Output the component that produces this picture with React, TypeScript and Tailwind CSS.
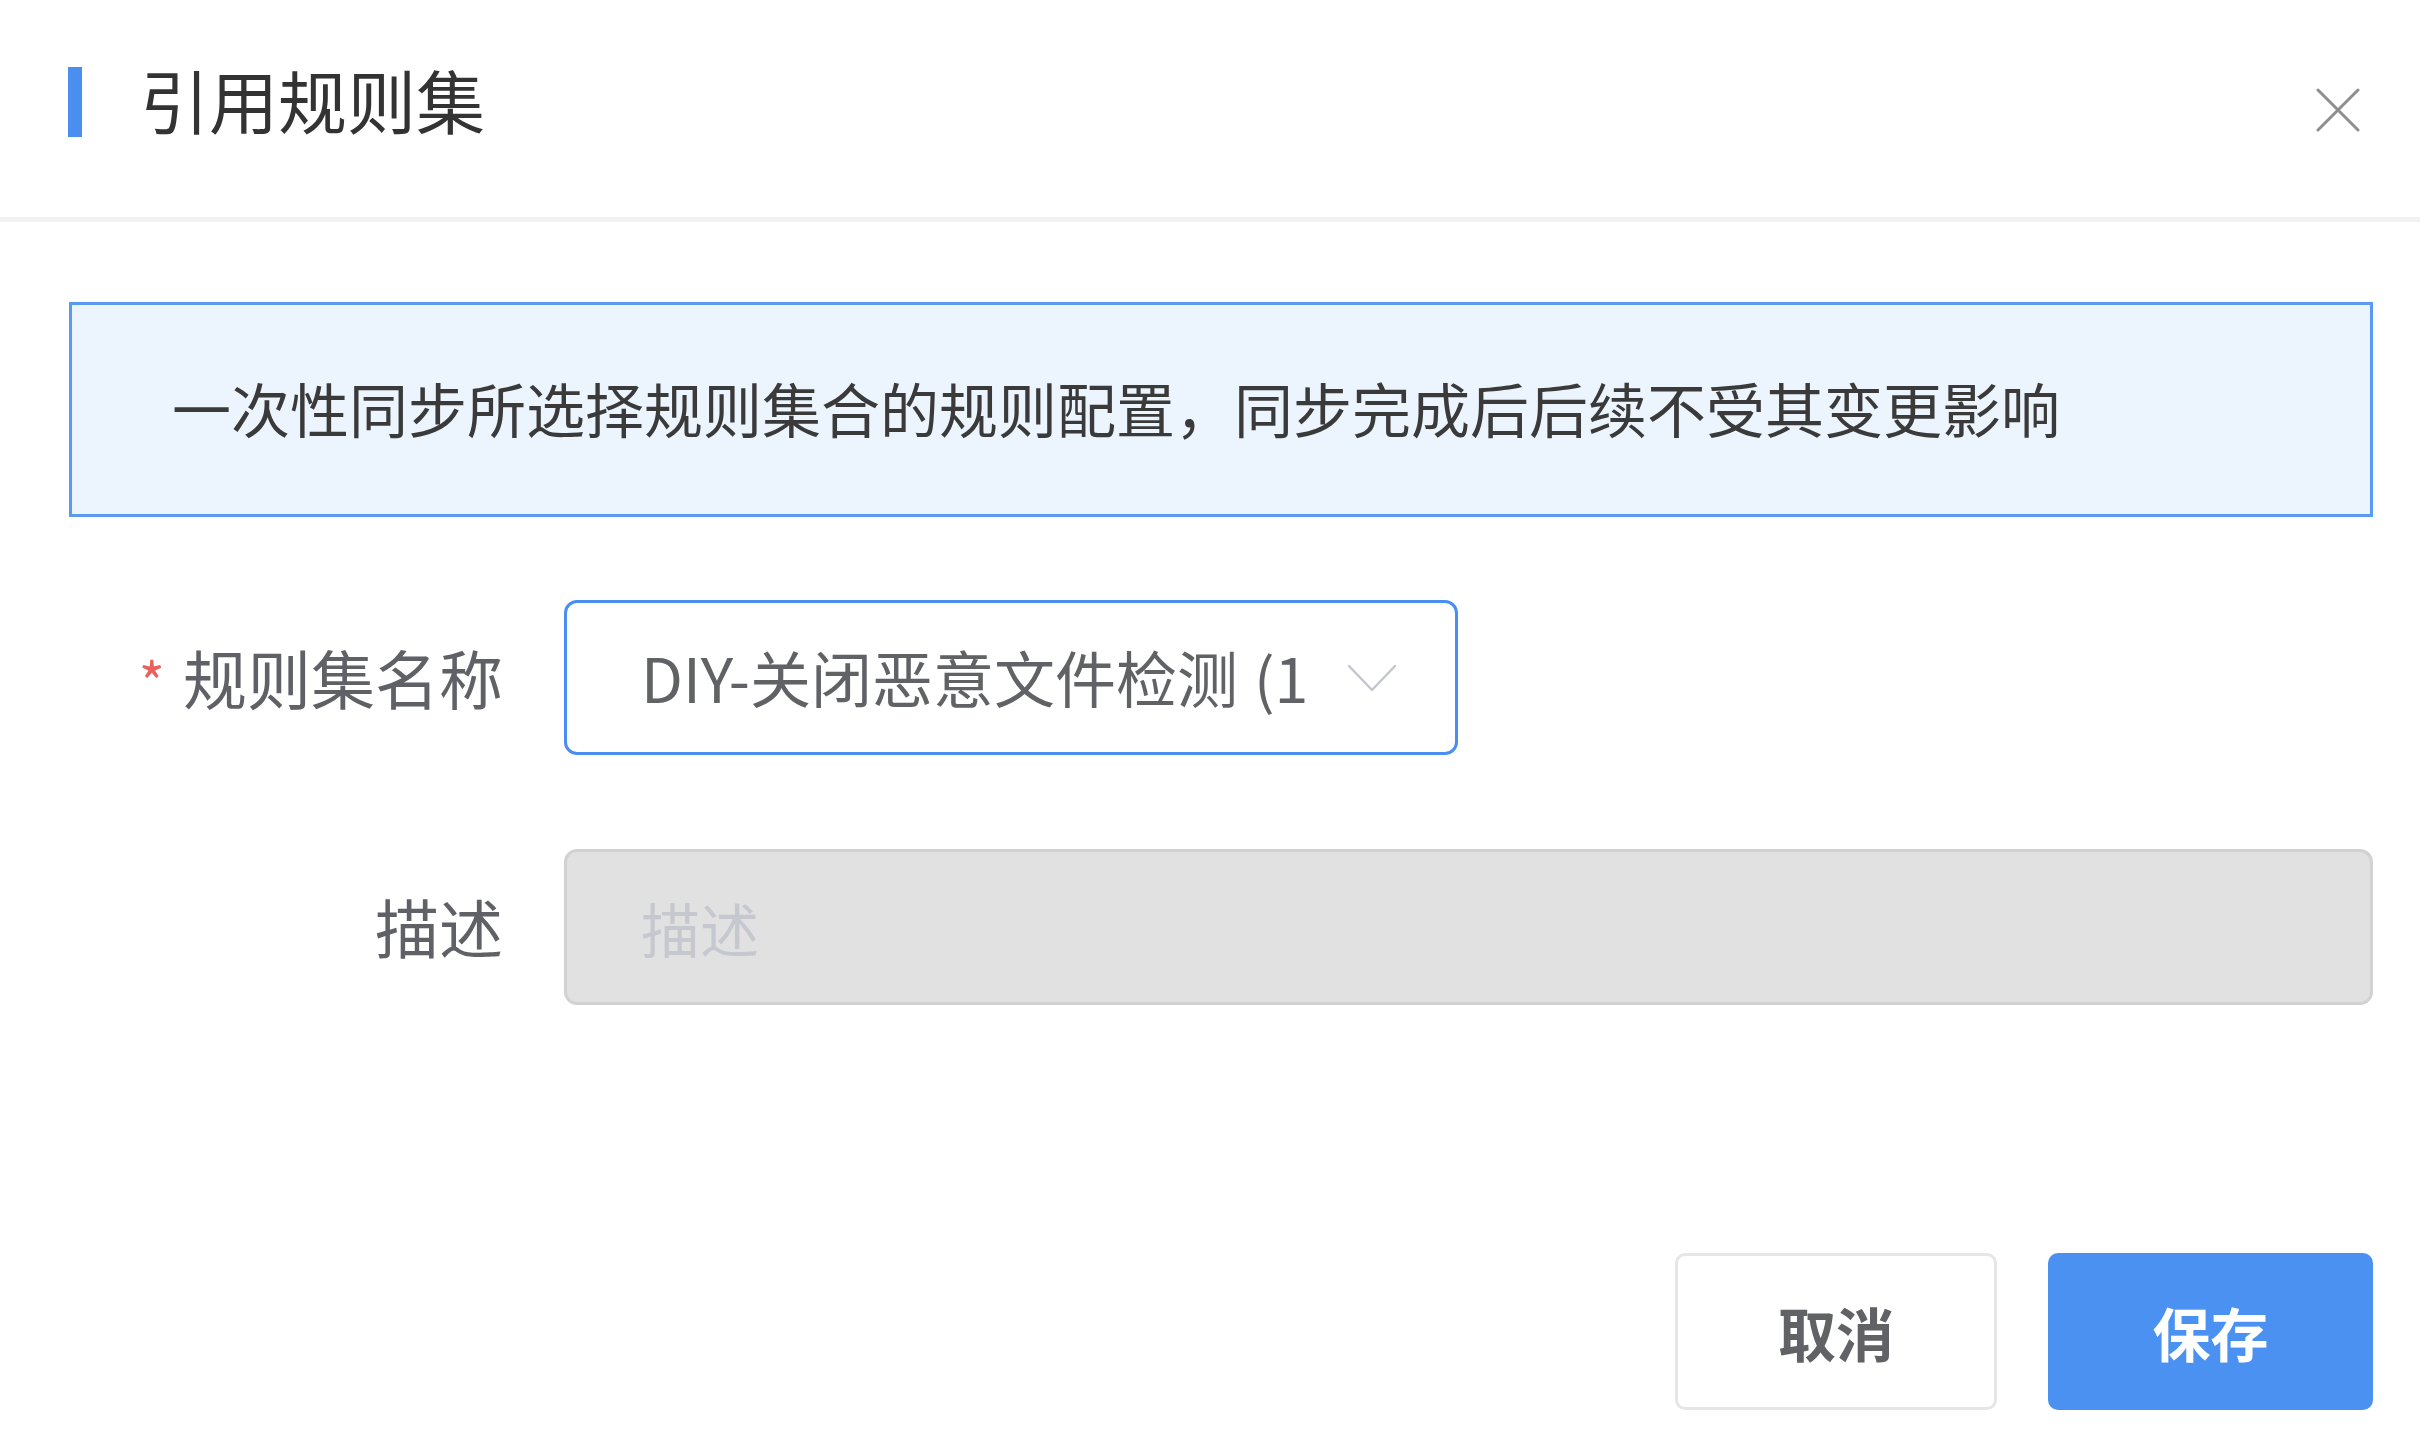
import React from "react";

function CloseIcon() {
  return (
    <svg width="44" height="44" viewBox="0 0 44 44" fill="none">
      <path d="M2 2L42 42M42 2L2 42" stroke="#8e8e8e" strokeWidth="3" strokeLinecap="round" />
    </svg>
  );
}

function ChevronDown() {
  return (
    <svg width="50" height="28" viewBox="0 0 50 28" fill="none">
      <path d="M2 2L25 26L48 2" stroke="#c4c7cd" strokeWidth="2.5" strokeLinecap="round" strokeLinejoin="round" />
    </svg>
  );
}

export default function App() {
  return (
    <div className="w-[2420px] h-[1440px] bg-white font-['Noto_Sans_CJK_SC','Liberation_Sans',sans-serif] overflow-hidden">
      {/* header */}
      <div className="h-[217px] flex items-center justify-between pl-[68px] pr-[60px]">
        <div className="flex items-center pb-[14px]">
          <div className="w-[14px] h-[70px] bg-[#4a8ff0]" />
          <h1 className="ml-[58px] text-[69px] leading-none text-[#333333] font-normal pb-[4px]">引用规则集</h1>
        </div>
        <button className="mt-[2px]">
          <CloseIcon />
        </button>
      </div>
      <div className="h-[5px] bg-[#f2f2f2]" />

      {/* body */}
      <div className="pl-[69px] pr-[47px]">
        <div className="mt-[80px] h-[215px] border-[3px] border-[#5a9bf1] bg-[#ecf4fe] flex items-center pl-[100px]">
          <p className="text-[59px] leading-none text-[#3a3a3a] pb-[4px]">
            一次性同步所选择规则集合的规则配置，同步完成后后续不受其变更影响
          </p>
        </div>

        {/* rule set name */}
        <div className="mt-[83px] flex items-center">
          <label className="w-[434px] flex items-center justify-end text-[64px] leading-none text-[#5f6166] pb-[4px]">
            <span className="text-[#e8615d] text-[56px] mr-[18px] mt-[8px]">*</span>
            规则集名称
          </label>
          <div className="ml-[61px] w-[894px] h-[155px] border-[3px] border-[#4a8ff0] rounded-[13px] flex items-center justify-between pl-[74px] pr-[58px]">
            <span className="text-[61px] leading-none text-[#606266] whitespace-nowrap pb-[2px]">
              DIY-关闭恶意文件检测<span className="ml-[16px]">(1</span>
            </span>
            <ChevronDown />
          </div>
        </div>

        {/* description */}
        <div className="mt-[94px] flex items-center">
          <label className="w-[434px] text-right text-[64px] leading-none text-[#5f6166] pb-[4px]">描述</label>
          <input
            readOnly
            placeholder="描述"
            className="ml-[61px] flex-1 h-[156px] bg-[#e1e1e1] border-[3px] border-[#d2d2d2] rounded-[13px] pl-[74px] text-[59px] text-[#606266] placeholder:text-[#c5c8ce] outline-none"
          />
        </div>

        {/* footer */}
        <div className="mt-[248px] flex justify-end gap-[51px]">
          <button className="w-[322px] h-[157px] border-[3px] border-[#e6e6e6] rounded-[10px] bg-white text-[58px] font-semibold text-[#606266] leading-none">
            取消
          </button>
          <button className="w-[325px] h-[157px] rounded-[10px] bg-[#4b91f1] text-[58px] font-semibold text-white leading-none">
            保存
          </button>
        </div>
      </div>
    </div>
  );
}
